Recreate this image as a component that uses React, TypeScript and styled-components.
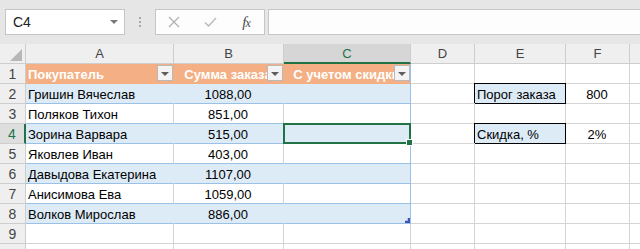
import React from 'react';
import styled, { createGlobalStyle } from 'styled-components';

const GRID = '#d4d4d4';
const HEAD_LINE = '#cdcdcd';
const ORANGE = '#f4b084';
const BAND = '#ddebf7';
const TABLE_LINE = '#9bc2e6';
const GREEN = '#217346';

const GlobalStyle = createGlobalStyle`
  html, body {
    margin: 0;
    padding: 0;
    background: #fff;
    overflow: hidden;
  }
  body {
    font-family: "Liberation Sans", Arial, sans-serif;
  }
`;

const Window = styled.div`
  width: 640px;
  height: 249px;
  overflow: hidden;
  background: #fff;
`;

const Toolbar = styled.div`
  height: 44px;
  box-sizing: border-box;
  background: #e6e6e6;
  padding: 9px 0 0 5px;
  display: flex;
  align-items: flex-start;
`;

const NameBox = styled.div`
  width: 120px;
  height: 26px;
  box-sizing: border-box;
  border: 1px solid #c6c6c6;
  background: #fff;
  display: flex;
  align-items: center;
  justify-content: space-between;
  padding: 0 6px 0 7px;
  font-size: 14px;
  color: #222;
`;

const DropArrow = styled.span`
  width: 0;
  height: 0;
  border-left: 4px solid transparent;
  border-right: 4px solid transparent;
  border-top: 4px solid #7a7a7a;
`;

const Grip = styled.div`
  width: 30px;
  height: 26px;
  display: flex;
  flex-direction: column;
  align-items: center;
  justify-content: center;
  gap: 2px;
`;

const GripDot = styled.span`
  width: 2px;
  height: 2px;
  background: #a9a9a9;
`;

const FuncBox = styled.div`
  width: 110px;
  height: 26px;
  box-sizing: border-box;
  border: 1px solid #c6c6c6;
  background: #fdfdfd;
  display: flex;
  align-items: center;
`;

const FuncSlot = styled.div`
  width: 36px;
  height: 24px;
  display: flex;
  align-items: center;
  justify-content: center;
`;

const FxLabel = styled.span`
  font-family: "Liberation Serif", "Times New Roman", serif;
  font-style: italic;
  font-size: 15px;
  color: #4a4a4a;
  letter-spacing: -1px;

  small {
    font-size: 12px;
  }
`;

const FormulaInput = styled.div`
  flex: 1;
  height: 26px;
  box-sizing: border-box;
  margin-left: 3px;
  border: 1px solid #c6c6c6;
  border-right: none;
  background: #fdfdfd;
`;

const Sheet = styled.div`
  display: grid;
  width: max-content;
  grid-template-columns: 26px 148px 110px 127px 64px 91px 64px 64px;
  grid-auto-rows: 20px;
  font-size: 13px;
`;

const Corner = styled.div`
  background: #efefef;
  border-right: 1px solid ${HEAD_LINE};
  border-bottom: 1px solid ${HEAD_LINE};
  box-sizing: border-box;
  display: flex;
  align-items: flex-end;
  justify-content: flex-end;
  padding: 0 3px 2px 0;
`;

const ColHead = styled.div<{ $active?: boolean }>`
  box-sizing: border-box;
  background: ${p => (p.$active ? '#d6d6d6' : '#efefef')};
  border-right: 1px solid ${HEAD_LINE};
  border-bottom: ${p => (p.$active ? `2px solid ${GREEN}` : `1px solid ${HEAD_LINE}`)};
  color: ${p => (p.$active ? GREEN : '#444')};
  text-align: center;
  line-height: 19px;
  font-size: 13px;
`;

const RowHead = styled.div<{ $active?: boolean }>`
  box-sizing: border-box;
  background: ${p => (p.$active ? '#dedede' : '#efefef')};
  border-right: ${p => (p.$active ? `2px solid ${GREEN}` : `1px solid ${HEAD_LINE}`)};
  border-bottom: 1px solid ${HEAD_LINE};
  color: ${p => (p.$active ? GREEN : '#444')};
  text-align: center;
  padding-top: 2px;
  line-height: 17px;
  font-size: 14px;
`;

const Cell = styled.div<{
  $bg?: string;
  $rb?: string;
  $bb?: string;
  $align?: 'left' | 'center';
  $head?: boolean;
  $boxed?: boolean;
  $selected?: boolean;
}>`
  position: relative;
  box-sizing: border-box;
  background: ${p => p.$bg ?? '#fff'};
  border-right: 1px solid ${p => (p.$boxed ? '#000' : p.$rb ?? GRID)};
  border-bottom: 1px solid ${p => (p.$boxed ? '#000' : p.$bb ?? GRID)};
  box-shadow: ${p => (p.$boxed ? '-1px -1px 0 #000, 0 -1px 0 #000' : 'none')};
  padding: 2px 3px 0 2px;
  line-height: 17px;
  white-space: nowrap;
  overflow: ${p => (p.$selected ? 'visible' : 'hidden')};
  text-align: ${p => p.$align ?? 'left'};
  font-weight: ${p => (p.$head ? 700 : 400)};
  color: ${p => (p.$head ? '#fff' : '#000')};
`;

const FilterButton = styled.span`
  position: absolute;
  top: 1px;
  right: 0;
  width: 16px;
  height: 16px;
  box-sizing: border-box;
  border: 1px solid #b9b9b9;
  background: #f3f3f3;
  display: flex;
  align-items: center;
  justify-content: center;

  &::after {
    content: '';
    border-left: 4px solid transparent;
    border-right: 4px solid transparent;
    border-top: 4px solid #5e5e5e;
    margin-top: 1px;
  }
`;

const SelectionFrame = styled.span`
  position: absolute;
  top: -1px;
  left: -1px;
  right: -1px;
  bottom: -1px;
  border: 2px solid ${GREEN};
  z-index: 3;
  pointer-events: none;
`;

const FillHandle = styled.span`
  position: absolute;
  right: -4px;
  bottom: -4px;
  width: 5px;
  height: 5px;
  background: ${GREEN};
  border: 1px solid #fff;
`;

const ResizeMark = styled.span`
  position: absolute;
  right: 0;
  bottom: 0;
  width: 5px;
  height: 5px;
  background: #3d55b8;
  clip-path: polygon(55% 0, 100% 0, 100% 100%, 0 100%, 0 55%, 55% 55%);
`;

const customers: [string, string][] = [
  ['Гришин Вячеслав', '1088,00'],
  ['Поляков Тихон', '851,00'],
  ['Зорина Варвара', '515,00'],
  ['Яковлев Иван', '403,00'],
  ['Давыдова Екатерина', '1107,00'],
  ['Анисимова Ева', '1059,00'],
  ['Волков Мирослав', '886,00'],
];

const params: Record<number, [string, string]> = {
  2: ['Порог заказа', '800'],
  4: ['Скидка, %', '2%'],
};

// G only peeks in at the right edge, its letter is off screen
const columns = ['A', 'B', 'C', 'D', 'E', 'F', ''];

const CloseIcon = () => (
  <svg width="12" height="12" viewBox="0 0 12 12">
    <path d="M1 1 L11 11 M11 1 L1 11" stroke="#b1b1b1" strokeWidth="1.3" fill="none" />
  </svg>
);

const CheckIcon = () => (
  <svg width="13" height="10" viewBox="0 0 13 10">
    <path d="M1 5.5 L4.5 9 L12 1" stroke="#bdbdbd" strokeWidth="1.6" fill="none" />
  </svg>
);

const CornerTriangle = () => (
  <svg width="12" height="12" viewBox="0 0 12 12">
    <polygon points="12,0 12,12 0,12" fill="#b7b7b7" />
  </svg>
);

// columns D..G, with the two parameter boxes in E/F
const OuterCells = ({ row }: { row: number }) => {
  const p = params[row];
  return (
    <>
      <Cell />
      {p ? (
        <Cell $boxed $bg={BAND}>{p[0]}</Cell>
      ) : (
        <Cell />
      )}
      <Cell $align="center">{p ? p[1] : ''}</Cell>
      <Cell />
    </>
  );
};

const App = () => {
  const rows: React.ReactNode[] = [];

  rows.push(
    <React.Fragment key={1}>
      <RowHead>1</RowHead>
      <Cell $head $bg={ORANGE} $rb={ORANGE} $bb={ORANGE}>
        Покупатель
        <FilterButton />
      </Cell>
      <Cell $head $bg={ORANGE} $rb={ORANGE} $bb={ORANGE} $align="center">
        Сумма заказа
        <FilterButton />
      </Cell>
      <Cell $head $bg={ORANGE} $rb={TABLE_LINE} $bb={ORANGE} $align="center">
        С учетом скидки
        <FilterButton />
      </Cell>
      <OuterCells row={1} />
    </React.Fragment>
  );

  customers.forEach(([name, sum], i) => {
    const row = i + 2;
    const band = row % 2 === 0;
    const bg = band ? BAND : '#fff';
    const inner = band ? BAND : GRID;
    const selected = row === 4;
    rows.push(
      <React.Fragment key={row}>
        <RowHead $active={selected}>{row}</RowHead>
        <Cell $bg={bg} $rb={inner} $bb={TABLE_LINE}>{name}</Cell>
        <Cell $bg={bg} $rb={inner} $bb={TABLE_LINE} $align="center">{sum}</Cell>
        <Cell $bg={bg} $rb={TABLE_LINE} $bb={TABLE_LINE} $selected={selected}>
          {selected && (
            <SelectionFrame>
              <FillHandle />
            </SelectionFrame>
          )}
          {row === 8 && <ResizeMark />}
        </Cell>
        <OuterCells row={row} />
      </React.Fragment>
    );
  });

  // row 9 is fully visible, row 10 only shows its top edge
  [9, 10].forEach(row => {
    rows.push(
      <React.Fragment key={row}>
        <RowHead>{row === 9 ? row : ''}</RowHead>
        <Cell />
        <Cell />
        <Cell />
        <OuterCells row={row} />
      </React.Fragment>
    );
  });

  return (
    <Window>
      <GlobalStyle />
      <Toolbar>
        <NameBox>
          C4
          <DropArrow />
        </NameBox>
        <Grip>
          <GripDot />
          <GripDot />
          <GripDot />
        </Grip>
        <FuncBox>
          <FuncSlot>
            <CloseIcon />
          </FuncSlot>
          <FuncSlot>
            <CheckIcon />
          </FuncSlot>
          <FuncSlot>
            <FxLabel>
              f<small>x</small>
            </FxLabel>
          </FuncSlot>
        </FuncBox>
        <FormulaInput />
      </Toolbar>
      <Sheet>
        <Corner>
          <CornerTriangle />
        </Corner>
        {columns.map((c, i) => (
          <ColHead key={i} $active={c === 'C'}>
            {c}
          </ColHead>
        ))}
        {rows}
      </Sheet>
    </Window>
  );
};

export default App;
